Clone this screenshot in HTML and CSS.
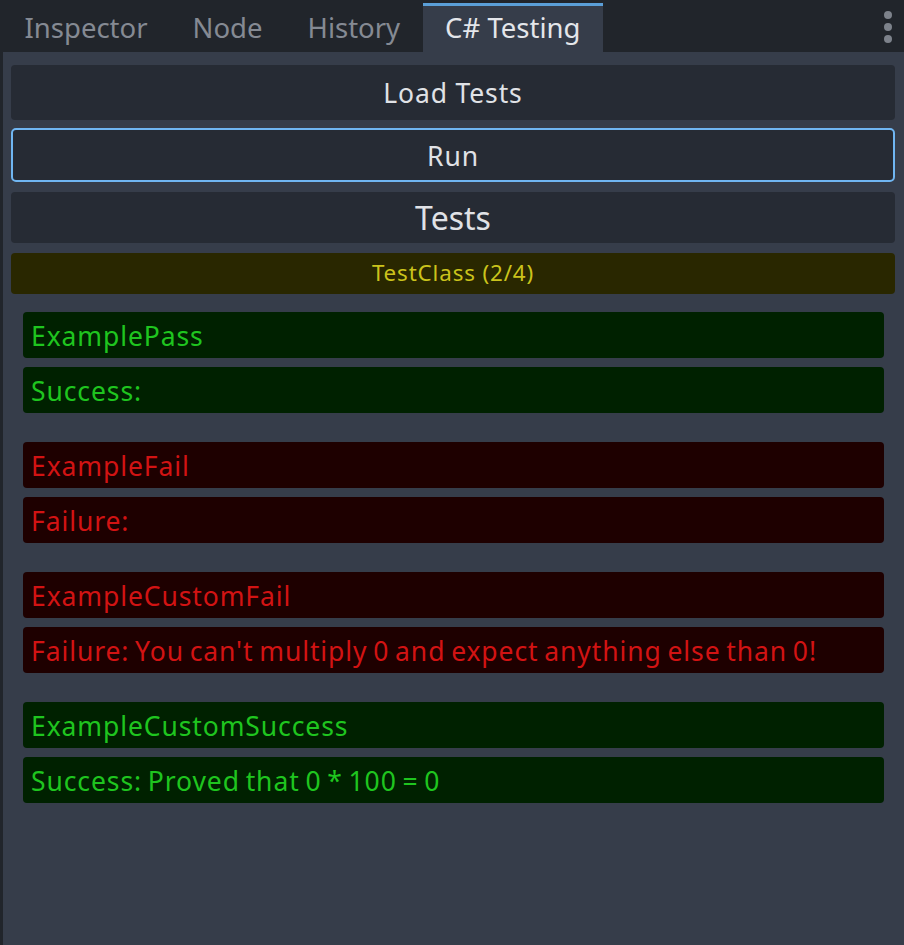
FILE: index.html
```html
<!DOCTYPE html>
<html>
<head>
<meta charset="utf-8">
<link rel="stylesheet" href="styles.css">
</head>
<body>
<div class="dock">
  <div class="tabbar">
    <div class="tab">Inspector</div>
    <div class="tab">Node</div>
    <div class="tab">History</div>
    <div class="tab active">C# Testing</div>
    <div class="spacer"></div>
    <div class="menu"><span></span><span></span><span></span></div>
  </div>
  <div class="panel">
    <div class="btn load">Load Tests</div>
    <div class="btn run">Run</div>
    <div class="btn title">Tests</div>
    <div class="classbar">TestClass (2/4)</div>
    <div class="tests">
      <div class="group">
        <div class="row pass">ExamplePass</div>
        <div class="row pass">Success:</div>
      </div>
      <div class="group">
        <div class="row fail">ExampleFail</div>
        <div class="row fail">Failure:</div>
      </div>
      <div class="group">
        <div class="row fail">ExampleCustomFail</div>
        <div class="row fail">Failure: You can't multiply 0 and expect anything else than 0!</div>
      </div>
      <div class="group">
        <div class="row pass">ExampleCustomSuccess</div>
        <div class="row pass">Success: Proved that 0 * 100 = 0</div>
      </div>
    </div>
  </div>
</div>
</body>
</html>
```
FILE: styles.css
```css
* { box-sizing: border-box; }
html, body {
  margin: 0;
  height: 100%;
  background: #21252b;
  font-family: "Noto Sans", "Open Sans", sans-serif;
}
.dock {
  display: flex;
  flex-direction: column;
  height: 945px;
}
.tabbar {
  display: flex;
  align-items: flex-end;
  height: 52px;
  padding-left: 2px;
  background: #21252b;
  flex: none;
}
.tab {
  height: 49px;
  font-size: 27.5px;
  line-height: 1.362;
  color: #858a93;
  padding: 6px 22.5px 0 22.5px;
  white-space: nowrap;
}
.tab.active {
  background: #363d4a;
  color: #e4e6ea;
  border-top: 3px solid #5b9fd8;
  padding-top: 3px;
}
.spacer { flex: 1; }
.menu {
  align-self: flex-start;
  width: 32px;
  display: flex;
  flex-direction: column;
  align-items: center;
  gap: 4px;
  padding-top: 11px;
}
.menu span {
  width: 8px;
  height: 8px;
  border-radius: 50%;
  background: #7d828b;
}
.panel {
  flex: 1;
  margin-left: 3px;
  background: #363d4a;
  padding: 13px 9px 0 8px;
  display: flex;
  flex-direction: column;
}
.btn {
  background: #262b34;
  border-radius: 4px;
  color: #e0e2e6;
  text-align: center;
  font-size: 26.5px;
  letter-spacing: 0.85px;
  overflow: hidden;
}
.load { height: 55px; line-height: 57px; }
.run {
  margin-top: 8px;
  height: 54px;
  line-height: 53px;
  border: 2.5px solid #70b6f2;
  border-radius: 5px;
}
.title {
  margin-top: 10px;
  height: 51px;
  line-height: 52px;
  font-size: 32px;
  letter-spacing: 0;
}
.classbar {
  margin-top: 10px;
  height: 41px;
  line-height: 39px;
  background: #292700;
  color: #cbc31c;
  border-radius: 4px;
  text-align: center;
  font-size: 22.4px;
  letter-spacing: 0.85px;
}
.tests {
  margin-top: 18px;
  padding: 0 11px 0 12px;
  display: flex;
  flex-direction: column;
  gap: 29px;
}
.group {
  display: flex;
  flex-direction: column;
  gap: 9px;
}
.row {
  height: 46px;
  line-height: 48px;
  border-radius: 4px;
  padding-left: 8px;
  font-size: 26.5px;
  letter-spacing: 0.9px;
  word-spacing: -2px;
  white-space: nowrap;
  overflow: hidden;
}
.pass { background: #002100; color: #1fc51f; }
.fail { background: #1e0000; color: #d21313; }
```
